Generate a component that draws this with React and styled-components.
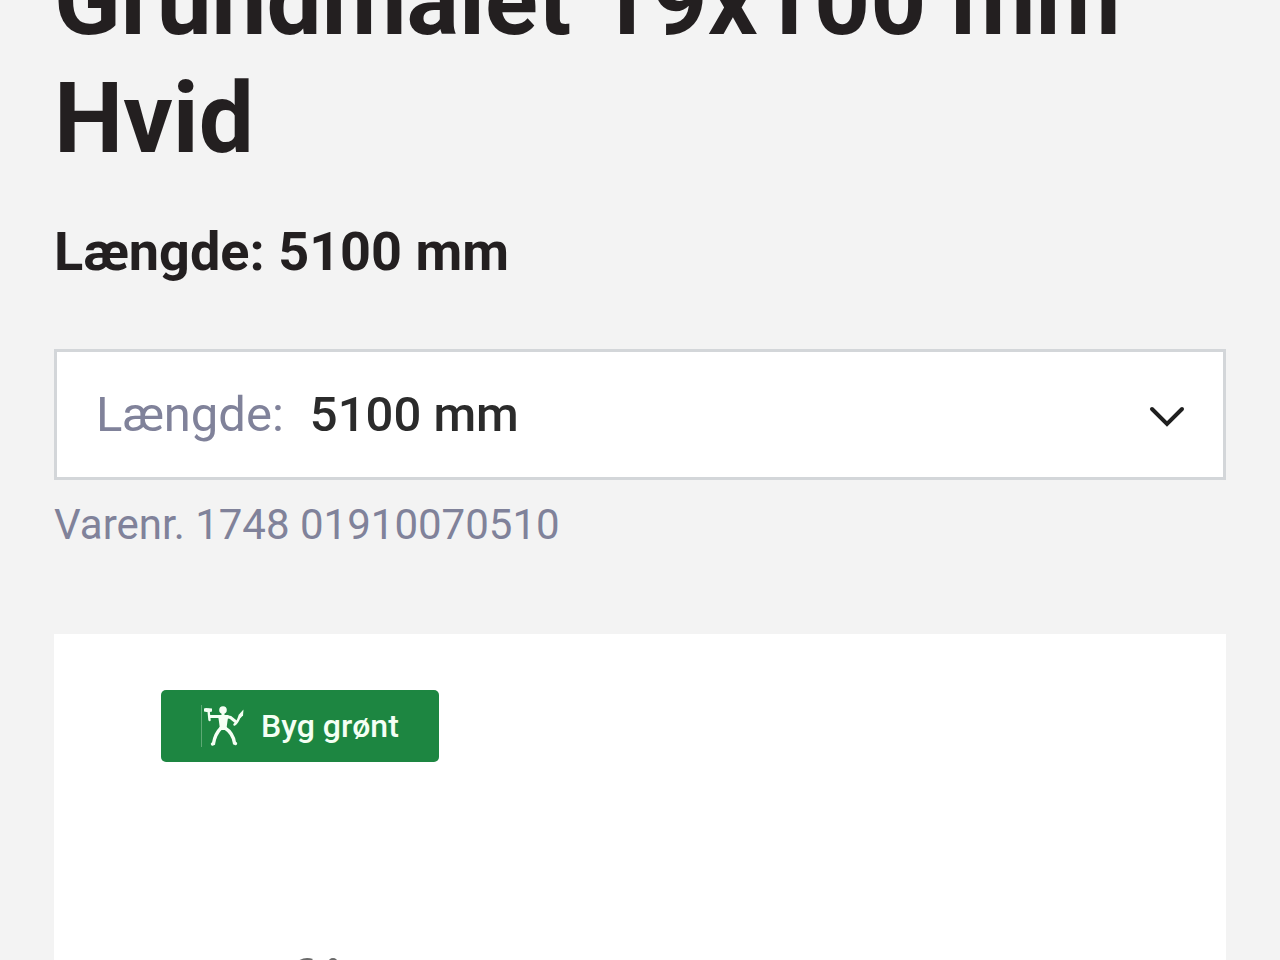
import styled, { createGlobalStyle } from "styled-components";

export default function App() {
  return (
    <>
      <GlobalStyle />
      <Page>
        <Title>Grundmalet 19x100 mm Hvid</Title>
        <Subtitle>Længde: 5100 mm</Subtitle>
        <Field>
          <FieldLabel htmlFor="length">Længde:</FieldLabel>
          <Select id="length" defaultValue="5100">
            <option value="5100">5100 mm</option>
          </Select>
          <Chevron viewBox="0 0 36 24" aria-hidden="true">
            <path d="M3 6 18 21 33 6" />
          </Chevron>
        </Field>
        <ItemNumber>Varenr. 1748 01910070510</ItemNumber>
        <Gallery>
          <Badge>
            <BuilderIcon />
            <span>Byg grønt</span>
          </Badge>
          <ProductDrawing viewBox="0 0 44 24" aria-hidden="true">
            <path d="M1 4Q8-1 16 2L13 5Q8 3 5 7Z" />
            <circle cx="36" cy="6" r="5" />
          </ProductDrawing>
        </Gallery>
      </Page>
    </>
  );
}

function BuilderIcon() {
  return (
    <Builder viewBox="0 0 44 44" aria-hidden="true">
      <path d="M.5 1v42" stroke="#5da974" />
      <g fill="#f4fff4">
        <circle cx="22" cy="6" r="3.8" />
        <path d="M20.500 8h3v3h4l-1 6-.8 6 1 3h-9l1-3-.8-6-1-6h3.600z" />
        <path d="M3 4.500 5 4l6 .5v3L9 8H5.500L3 7.500z" />
        <path d="m37.500 11 5-5.500-.5 6-3.500 3.500z" />
      </g>
      <g fill="none" stroke="#f4fff4" strokeLinecap="round">
        <path d="M7.500 6 8.500 16" strokeWidth="2.400" />
        <path d="M9 12.500h9.500M25 12.500l4.500 1 5 4" strokeWidth="3" />
        <path d="M33.500 20.500q3-2 5-8" strokeWidth="2.400" />
        <path
          d="M20 24q-6 6-7.500 15.500l-1 .5M24 24q8 5 9.500 15l1 .5"
          strokeWidth="3.400"
        />
      </g>
    </Builder>
  );
}

const GlobalStyle = createGlobalStyle`
  * {
    box-sizing: border-box;
  }
  body {
    margin: 0;
    background: #f3f3f3;
    color: #231f20;
    font-family: Roboto, "Liberation Sans", sans-serif;
  }
`;

const Page = styled.main`
  height: 100vh;
  display: flex;
  flex-direction: column;
  padding: 0 54px;
  overflow: hidden;
`;

const Title = styled.h1`
  flex: none;
  margin: -58px 0 42px;
  font-size: 98px;
  line-height: 118px;
  font-weight: 700;
`;

const Subtitle = styled.h2`
  margin: 0 0 65px;
  font-size: 54px;
  line-height: 64px;
  font-weight: 700;
`;

const Field = styled.div`
  flex: none;
  display: flex;
  align-items: center;
  height: 131px;
  padding: 0 38px 0 39px;
  background: #fff;
  border: 3px solid #d3d6d9;
`;

const FieldLabel = styled.label`
  margin-right: 26px;
  font-size: 49px;
  line-height: 58px;
  color: #80829a;
`;

const Select = styled.select`
  flex: 1;
  min-width: 0;
  padding: 0;
  appearance: none;
  border: 0;
  background: transparent;
  color: #2b2b2b;
  font-family: inherit;
  font-size: 49px;
  line-height: 58px;
  font-weight: 500;
`;

const Chevron = styled.svg`
  width: 36px;
  height: 24px;
  pointer-events: none;

  path {
    fill: none;
    stroke: #1f1f1f;
    stroke-width: 4;
    stroke-linecap: round;
  }
`;

const ItemNumber = styled.p`
  margin: 20px 0 84px;
  font-size: 42px;
  line-height: 50px;
  color: #80829a;
`;

const Gallery = styled.section`
  flex: 1;
  display: flex;
  flex-direction: column;
  align-items: flex-start;
  min-height: 0;
  padding: 56px 107px 0;
  background: #fff;
`;

const Badge = styled.div`
  flex: none;
  display: flex;
  align-items: center;
  gap: 16px;
  height: 72px;
  padding: 0 40px;
  border-radius: 5px;
  background: #1d8641;
  color: #f4fff4;
  font-size: 32px;
  line-height: 38px;
  font-weight: 500;
`;

const Builder = styled.svg`
  width: 44px;
  height: 44px;
`;

const ProductDrawing = styled.svg`
  flex: none;
  width: 44px;
  height: 24px;
  margin: 195px 0 0 136px;
  fill: #6a6a6a;
`;
